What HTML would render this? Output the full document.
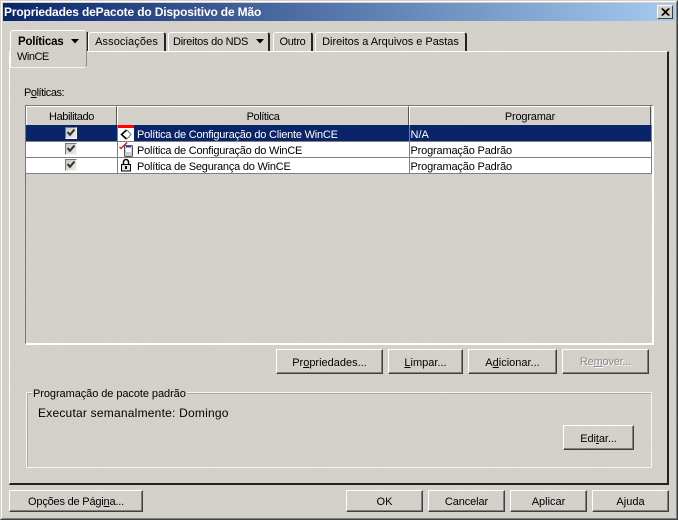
<!DOCTYPE html>
<html><head><meta charset="utf-8"><style>
html,body{margin:0;padding:0}
#w{position:relative;width:678px;height:520px;overflow:hidden;font:11px/14px "Liberation Sans",sans-serif;color:#000;
background-color:#d3d1ca;background-image:repeating-linear-gradient(45deg,#d6d4cd 0 1px,#cfcdc6 1px 2px)}
#w div{position:absolute;box-sizing:border-box}
.t{white-space:nowrap}
.b{border:1px solid;border-color:#fff #404040 #404040 #fff;box-shadow:inset -1px -1px 0 #808080;text-align:center;white-space:nowrap}
.n{line-height:27px}
.s{line-height:22px}
.tab{border-top:1px solid #fff;border-left:1px solid #fff;border-right:2px solid #222;border-top-left-radius:3px;border-top-right-radius:3px;text-align:center;white-space:nowrap;line-height:18px}
.h{border:1px solid;border-color:#fff #555 #555 #fff;text-align:center;line-height:20px}
.cb{width:12px;height:12px;background:linear-gradient(135deg,#c8c6c0,#eeece8);border:1px solid;border-color:#777 #f4f4f4 #f4f4f4 #777}
u{text-decoration:underline}
</style></head><body><div id="w">
<!-- window frame -->
<div style="left:0;top:0;width:678px;height:520px;border:1px solid;border-color:#d4d0c8 #404040 #404040 #d4d0c8"></div>
<div style="left:1px;top:1px;width:676px;height:518px;border:1px solid;border-color:#fff #808080 #808080 #fff"></div>
<!-- title -->
<div style="left:3px;top:3px;width:672px;height:18px;background:linear-gradient(90deg,#0a246a,#a6caef)"></div>
<div class="t" style="left:4px;top:5px;color:#fff;font-weight:bold;font-size:12px;letter-spacing:-.16px">Propriedades dePacote do Dispositivo de Mão</div>
<div style="left:657px;top:5px;width:16px;height:14px;background:#d4d0c8;border:1px solid;border-color:#fff #404040 #404040 #fff">
<svg width="14" height="12" style="position:absolute;left:0;top:0"><path d="M3.5 2.5L10.5 9.5M4.5 2.5L11.5 9.5M10.5 2.5L3.5 9.5M11.5 2.5L4.5 9.5" stroke="#000" stroke-width="1" fill="none"/></svg></div>
<!-- panel -->
<div style="left:9px;top:51px;width:660px;height:434px;border:1px solid;border-width:1px 2px 2px 1px;border-color:#fff #222 #222 #fff"></div>
<!-- tabs -->
<div class="tab" style="left:88px;top:32px;width:78px;height:19px;letter-spacing:.1px">Associações</div>
<div class="tab" style="left:168px;top:32px;width:102px;height:19px;text-align:left;padding-left:4px;letter-spacing:-.25px">Direitos do NDS</div>
<svg style="position:absolute;left:256px;top:39px" width="8" height="5"><path d="M0 0H8L4 4.5Z"/></svg>
<div class="tab" style="left:273px;top:32px;width:40px;height:19px;letter-spacing:-.3px">Outro</div>
<div class="tab" style="left:315px;top:32px;width:152px;height:19px;letter-spacing:-.03px">Direitos a Arquivos e Pastas</div>
<div style="left:86px;top:32px;width:2px;height:19px;background:#222"></div>
<div style="left:10px;top:30px;width:77px;height:38px;background-color:#d3d1ca;background-image:repeating-linear-gradient(45deg,#d6d4cd 0 1px,#cfcdc6 1px 2px);border:1px solid;border-color:#fff #8a8a8a #f4f4f4 #fff;border-radius:3px 3px 4px 0"></div>
<div class="t" style="left:18px;top:35px;font-weight:bold;font-size:11.5px;letter-spacing:-.2px">Políticas</div>
<svg style="position:absolute;left:71px;top:39px" width="8" height="5"><path d="M0 0H8L4 4.5Z"/></svg>
<div class="t" style="left:17px;top:50px;letter-spacing:-.5px">WinCE</div>
<!-- label -->
<div class="t" style="left:24px;top:86px;letter-spacing:-.45px">P<u>o</u>líticas:</div>
<!-- table -->
<div style="left:25px;top:105px;width:629px;height:240px;border:1px solid;border-width:1px 2px 2px 1px;border-color:#777 #fff #fff #777"></div>
<div class="h" style="left:26px;top:106px;width:91px;height:20px;letter-spacing:-.4px">Habilitado</div>
<div class="h" style="left:117px;top:106px;width:292px;height:20px;letter-spacing:-.4px">Política</div>
<div class="h" style="left:409px;top:106px;width:242px;height:20px;letter-spacing:-.2px">Programar</div>
<div style="left:26px;top:125px;width:626px;height:16px;background:#0a246a"></div>
<div style="left:26px;top:142px;width:626px;height:15px;background:#fff"></div>
<div style="left:26px;top:158px;width:626px;height:15px;background:#fff"></div>
<div style="left:26px;top:141px;width:626px;height:1px;background:#808080"></div>
<div style="left:26px;top:157px;width:626px;height:1px;background:#808080"></div>
<div style="left:26px;top:173px;width:626px;height:1px;background:#808080"></div>
<div style="left:117px;top:125px;width:1px;height:49px;background:#808080"></div>
<div style="left:409px;top:125px;width:1px;height:49px;background:#808080"></div>
<div style="left:651px;top:125px;width:1px;height:49px;background:#808080"></div>
<!-- checkboxes -->
<div class="cb" style="left:65px;top:127px"><svg width="10" height="10" style="position:absolute;left:0;top:0"><path d="M1.5 4L4 6.8L8.5 1.5" stroke="#333" stroke-width="2" fill="none"/></svg></div>
<div class="cb" style="left:65px;top:143px"><svg width="10" height="10" style="position:absolute;left:0;top:0"><path d="M1.5 4L4 6.8L8.5 1.5" stroke="#333" stroke-width="2" fill="none"/></svg></div>
<div class="cb" style="left:65px;top:159px"><svg width="10" height="10" style="position:absolute;left:0;top:0"><path d="M1.5 4L4 6.8L8.5 1.5" stroke="#333" stroke-width="2" fill="none"/></svg></div>
<!-- icons -->
<svg style="position:absolute;left:118px;top:125px" width="16" height="16"><rect width="16" height="16" fill="#fff"/><rect width="16" height="3" fill="#f00"/><path d="M8.5 5L3.5 9.5L8.5 14" stroke="#000" stroke-width="1.6" fill="none"/><path d="M9 5L13 9.5L9 14" stroke="#777" fill="none"/></svg>
<svg style="position:absolute;left:118px;top:141px" width="16" height="16"><path d="M1.5 6L3 7.5L9 1.5" stroke="#d01010" stroke-width="1.3" fill="none"/><rect x="6.5" y="4.5" width="8" height="11" rx="1" fill="#ccc" stroke="#555"/><rect x="8" y="5" width="5" height="1.5" fill="#2040d0"/><rect x="8" y="6.5" width="5" height="4.5" fill="#fff"/></svg>
<svg style="position:absolute;left:118px;top:158px" width="16" height="15"><path d="M5.5 7V4a2.5 2.5 0 0 1 5 0V7" stroke="#000" stroke-width="1.5" fill="none"/><rect x="3.5" y="6.5" width="9" height="6.5" fill="#e4e2dc" stroke="#000"/><rect x="7" y="8" width="2" height="3" fill="#000"/></svg>
<!-- cells -->
<div class="t" style="left:137px;top:128px;color:#fff;letter-spacing:-.22px">Política de Configuração do Cliente WinCE</div>
<div class="t" style="left:137px;top:144px;letter-spacing:-.22px">Política de Configuração do WinCE</div>
<div class="t" style="left:137px;top:160px;letter-spacing:-.22px">Política de Segurança do WinCE</div>
<div class="t" style="left:410.5px;top:128px;color:#fff">N/A</div>
<div class="t" style="left:410.5px;top:144px;letter-spacing:-.17px">Programação Padrão</div>
<div class="t" style="left:410.5px;top:160px;letter-spacing:-.17px">Programação Padrão</div>
<!-- buttons -->
<div class="b n" style="left:276px;top:349px;width:107px;height:25px">Pr<u>o</u>priedades...</div>
<div class="b n" style="left:388px;top:349px;width:75px;height:25px"><u>L</u>impar...</div>
<div class="b n" style="left:468px;top:349px;width:89px;height:25px">A<u>d</u>icionar...</div>
<div class="b n" style="left:562px;top:349px;width:87px;height:25px;line-height:25px;color:#8a8a8a;text-shadow:1px 1px 0 #fff;letter-spacing:-.2px">Re<u>m</u>over...</div>
<!-- group -->
<div style="left:26px;top:392px;width:626px;height:76px;border:1px solid #f4f4f4;box-shadow:inset 1px 1px 0 #aaa"></div>
<div class="t" style="left:32px;top:387px;padding:0 1px;background:#d3d1ca;letter-spacing:-.07px">Programação de pacote padrão</div>
<div class="t" style="left:38px;top:406px;font-size:12px;letter-spacing:.22px">Executar semanalmente: Domingo</div>
<div class="b n" style="left:563px;top:425px;width:71px;height:25px;letter-spacing:-.1px">Edi<u>t</u>ar...</div>
<!-- bottom -->
<div class="b s" style="left:9px;top:490px;width:134px;height:22px;letter-spacing:-.2px">Opções de Pági<u>n</u>a...</div>
<div class="b s" style="left:346px;top:490px;width:77px;height:22px">OK</div>
<div class="b s" style="left:428px;top:490px;width:77px;height:22px;letter-spacing:-.1px">Cancelar</div>
<div class="b s" style="left:510px;top:490px;width:77px;height:22px">Aplicar</div>
<div class="b s" style="left:592px;top:490px;width:77px;height:22px">A<u>j</u>uda</div>
</div></body></html>
